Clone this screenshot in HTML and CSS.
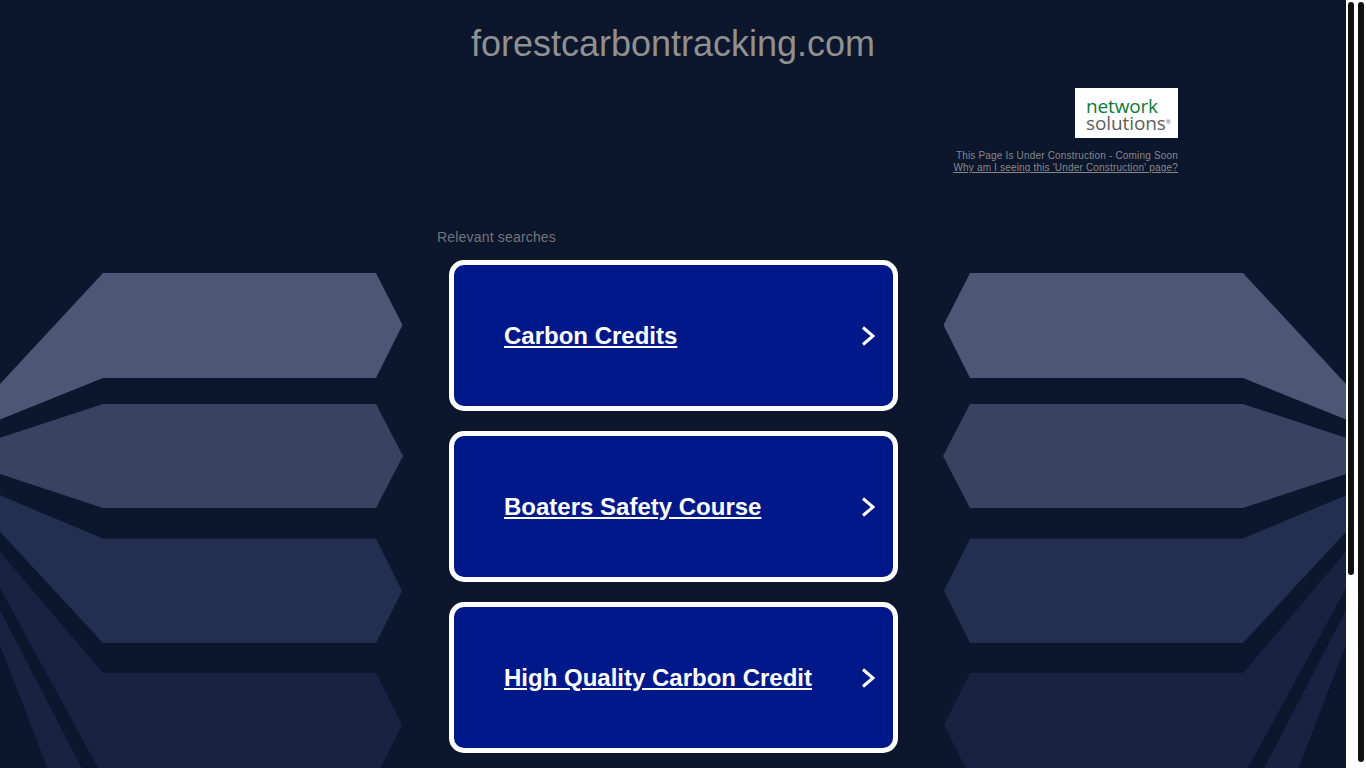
FILE: index.html
```html
<!DOCTYPE html>
<html lang="en">
<head>
<meta charset="utf-8">
<title>forestcarbontracking.com</title>
<link rel="stylesheet" href="styles.css">
</head>
<body>
<div class="shell">
<main class="page">
<svg class="bg" viewBox="0 0 1346 790" aria-hidden="true">
<g>
<polygon class="b1" points="0,384 103,273 376,273 402.5,325 376,378 103,378 0,419.5"/>
<polygon class="b2" points="0,437.7 103,404 376,404 403,456 376,508 103,508 0,474"/>
<polygon class="b3" points="0,495.3 103,538.5 376,538.5 402,591 376,643 103,643 0,531.7"/>
<polygon class="b4" points="0,551.7 103,673 376,673 402,725 376,777 103,777 0,588"/>
<polygon class="b4" points="0,610 93,790 56,790 0,645"/>
</g>
<g transform="matrix(-1 0 0 1 1346 0)">
<polygon class="b1" points="0,384 103,273 376,273 402.5,325 376,378 103,378 0,419.5"/>
<polygon class="b2" points="0,437.7 103,404 376,404 403,456 376,508 103,508 0,474"/>
<polygon class="b3" points="0,495.3 103,538.5 376,538.5 402,591 376,643 103,643 0,531.7"/>
<polygon class="b4" points="0,551.7 103,673 376,673 402,725 376,777 103,777 0,588"/>
<polygon class="b4" points="0,610 93,790 56,790 0,645"/>
</g>
</svg>
<h1 class="domain">forestcarbontracking.com</h1>
<div class="brand">
<div class="logo"><span class="logo-top">network</span><span class="logo-bottom">solutions<sup class="reg">®</sup></span></div>
<p class="notice">This Page Is Under Construction - Coming Soon<br><a href="#">Why am I seeing this 'Under Construction' page?</a></p>
</div>
<section class="searches">
<p class="searches-title">Relevant searches</p>
<a class="card" href="#"><span class="card-label">Carbon Credits</span><svg class="chev" viewBox="0 0 14 20"><path d="M2 1.5 L12 10 L2 18.5"/></svg></a>
<a class="card" href="#"><span class="card-label">Boaters Safety Course</span><svg class="chev" viewBox="0 0 14 20"><path d="M2 1.5 L12 10 L2 18.5"/></svg></a>
<a class="card" href="#"><span class="card-label">High Quality Carbon Credit</span><svg class="chev" viewBox="0 0 14 20"><path d="M2 1.5 L12 10 L2 18.5"/></svg></a>
</section>
</main>
<div class="rail"><div class="thumb thumb-inner"></div></div>
<div class="rail"><div class="thumb thumb-outer"></div></div>
</div>
</body>
</html>
```
FILE: styles.css
```css
html, body { margin: 0; padding: 0; height: 100%; overflow: hidden; background: #fff; }
body { font-family: "Liberation Sans", Arial, sans-serif; }
.shell { display: flex; height: 768px; }
.page { position: relative; width: 1346px; flex: none; height: 768px; background: #0c162d; display: flex; flex-direction: column; align-items: center; overflow: hidden; }
.rail { width: 10px; flex: none; background: #fff; padding: 2px; box-sizing: border-box; }
.thumb { background: #111; border-radius: 3px; width: 6px; }
.thumb-inner { height: 573px; }
.thumb-outer { height: 760px; }
.bg { position: absolute; left: 0; top: 0; width: 1346px; height: 790px; }
.b1 { fill: #4b5775; }
.b2 { fill: #384362; }
.b3 { fill: #232f50; }
.b4 { fill: #182342; }
.domain { position: relative; margin: 24px 0 0; font-size: 36px; line-height: 40px; font-weight: 400; color: #909090; }
.brand { position: relative; width: 1010px; margin-top: 24px; display: flex; flex-direction: column; align-items: flex-end; }
.logo { width: 103px; height: 50px; background: #fff; display: flex; flex-direction: column; box-sizing: border-box; padding: 10px 0 0 11px; font-family: "Open Sans", sans-serif; }
.logo-top { font-size: 19px; line-height: 17px; font-weight: 500; letter-spacing: -0.15px; color: #0b7a3b; }
.logo-bottom { font-size: 19px; line-height: 16px; letter-spacing: -0.1px; color: #5d5d5d; }
.reg { font-size: 6px; line-height: 0; vertical-align: 6px; }
.notice { margin: 12px 0 0; font-size: 10px; line-height: 12px; color: #888; text-align: right; letter-spacing: 0.18px; }
.notice a { color: #888; }
.searches { position: relative; width: 472px; margin-top: 55px; display: flex; flex-direction: column; align-items: flex-start; gap: 20px; }
.searches-title { margin: 0 0 -5px; font-size: 14px; line-height: 16px; letter-spacing: 0.18px; color: #757575; }
.card { width: 449px; height: 151px; margin-left: 12px; box-sizing: border-box; border: 5px solid #fff; border-radius: 15px; background: #01188a; display: flex; align-items: center; justify-content: space-between; padding: 0 18px 0 50px; color: #fff; text-decoration: none; }
.card-label { font-size: 24px; line-height: 28px; font-weight: 700; text-decoration: underline; }
.chev { width: 14px; height: 20px; flex: none; fill: none; stroke: #fff; stroke-width: 3; }
```
